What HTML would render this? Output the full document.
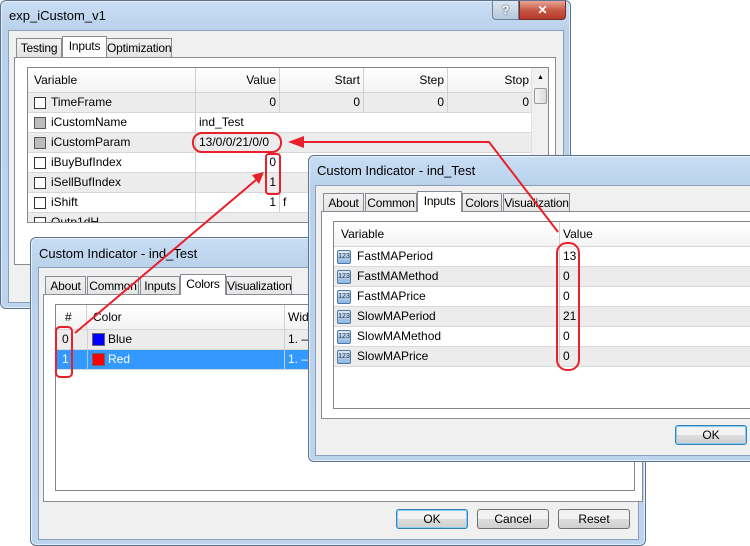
<!DOCTYPE html>
<html><head><meta charset="utf-8"><style>
*{box-sizing:border-box;margin:0;padding:0}
body{width:750px;height:546px;background:#fff;position:relative;overflow:hidden;font-family:"Liberation Sans",sans-serif;font-size:12px;color:#000}
.a{position:absolute}
.win{position:absolute;background:linear-gradient(#c9def5,#b9d1ea 30px,#bcd4ee);border:1px solid #5b738c;border-radius:6px;box-shadow:0 0 0 1px rgba(255,255,255,.6) inset}
.title{position:absolute;left:8px;top:7px;font-size:13px}
.body{position:absolute;background:#f0f0f0;border:1px solid #8aa0b8}
.tab{position:absolute;height:19px;border:1px solid #898c95;border-bottom:none;background:linear-gradient(#f2f2f2,#e3e3e3);text-align:center;line-height:18px;padding:0;white-space:nowrap;overflow:hidden;letter-spacing:-0.2px}
.tab.on{background:#fff;height:21px;z-index:2}
.grid{position:absolute;border:1px solid #828790;background:#fff;overflow:hidden}
.hd{position:absolute;top:0;height:25px;line-height:25px;background:linear-gradient(#fff,#f3f3f3);border-bottom:1px solid #d5d5d5}
.row{position:absolute;left:0;right:0;height:20px;line-height:19px;border-bottom:1px solid #d8d8d8}
.g{background:#ececec}
.c{position:absolute;top:0;height:20px;border-right:1px solid #d0d0d0;padding:0 3px}
.r{text-align:right}
.cb{position:absolute;left:6px;top:4px;width:12px;height:12px;border:1px solid #333;background:#fff}
.cb.d{background:#bcbcbc;border-color:#555}
.ic{position:absolute;left:3px;top:3px;width:14px;height:14px;background:linear-gradient(#dbeaf9,#8fb6e0);border:1px solid #4d79aa;border-radius:2px;font-size:7px;line-height:12px;text-align:center;color:#123}
.btn{position:absolute;height:20px;border:1px solid #707070;border-radius:3px;background:linear-gradient(#f2f2f2 50%,#dddddd 50%,#cfcfcf);text-align:center;line-height:18px}
.btn.def{border-color:#3c7fb1;box-shadow:0 0 0 1px #7fd0f5 inset}
</style></head><body>

<div class="win" style="left:0;top:0;width:571px;height:309px">
  <div class="title">exp_iCustom_v1</div>
  <div class="a" style="left:491px;top:0;width:27px;height:19px;border:1px solid #6d829a;border-top:none;border-radius:0 0 0 4px;background:linear-gradient(#dbe6f2,#b6c8dc);text-align:center;color:#fff;font-weight:bold;line-height:18px;text-shadow:0 0 2px #333">?</div>
  <div class="a" style="left:518px;top:0;width:47px;height:19px;border:1px solid #7a2a24;border-top:none;border-radius:0 0 4px 0;background:linear-gradient(#e8a597,#c75a45 50%,#b8382a);text-align:center;color:#fff;font-weight:bold;line-height:18px">✕</div>
  <div class="body" style="left:7px;top:29px;width:556px;height:273px"></div>
</div>
<div class="tab" style="left:16px;top:38px;width:46px">Testing</div>
<div class="tab on" style="left:62px;top:36px;width:45px">Inputs</div>
<div class="tab" style="left:106px;top:38px;width:66px">Optimization</div>
<div class="a" style="left:14px;top:57px;width:542px;height:208px;background:#fff;border:1px solid #898c95"></div>
<div class="grid" style="left:27px;top:67px;width:522px;height:156px">
  <div class="hd" style="left:0;width:504px">
    <div class="c" style="left:0;width:168px;height:25px;padding-left:6px">Variable</div>
    <div class="c r" style="left:168px;width:84px;height:25px">Value</div>
    <div class="c r" style="left:252px;width:84px;height:25px">Start</div>
    <div class="c r" style="left:336px;width:84px;height:25px">Step</div>
    <div class="c r" style="left:420px;width:84px;height:25px;border:none">Stop</div>
  </div>
  <div class="row g" style="top:25px;right:17px"><div class="cb"></div><div class="c" style="left:20px;width:148px">TimeFrame</div><div class="c r" style="left:168px;width:84px">0</div><div class="c r" style="left:252px;width:84px">0</div><div class="c r" style="left:336px;width:84px">0</div><div class="c r" style="left:420px;width:84px;border:none">0</div></div>
  <div class="row" style="top:45px;right:17px"><div class="cb d"></div><div class="c" style="left:20px;width:148px">iCustomName</div><div class="c" style="left:168px;width:336px;border:none">ind_Test</div></div>
  <div class="row g" style="top:65px;right:17px"><div class="cb d"></div><div class="c" style="left:20px;width:148px">iCustomParam</div><div class="c" style="left:168px;width:336px;border:none">13/0/0/21/0/0</div></div>
  <div class="row" style="top:85px;right:17px"><div class="cb"></div><div class="c" style="left:20px;width:148px">iBuyBufIndex</div><div class="c r" style="left:168px;width:84px">0</div></div>
  <div class="row g" style="top:105px;right:17px"><div class="cb"></div><div class="c" style="left:20px;width:148px">iSellBufIndex</div><div class="c r" style="left:168px;width:84px">1</div></div>
  <div class="row" style="top:125px;right:17px"><div class="cb"></div><div class="c" style="left:20px;width:148px">iShift</div><div class="c r" style="left:168px;width:84px">1</div><div class="c" style="left:252px;width:84px">f</div></div>
  <div class="row g" style="top:145px;right:17px"><div class="cb"></div><div class="c" style="left:20px;width:148px">Outp1dH</div></div>
  <div class="a" style="right:0;top:0;width:17px;height:156px;background:#f0f0f0;border-left:1px solid #e0e0e0"><div class="a" style="left:2px;top:20px;width:13px;height:16px;border:1px solid #999;border-radius:2px;background:linear-gradient(90deg,#f3f3f3,#dcdcdc)"></div><div class="a" style="left:5px;top:6px;font-size:7px">▲</div></div>
</div>

<div class="win" style="left:30px;top:237px;width:616px;height:309px">
  <div class="title" style="top:8px">Custom Indicator - ind_Test</div>
  <div class="body" style="left:7px;top:29px;width:601px;height:273px"></div>
</div>
<div class="tab" style="left:45px;top:276px;width:41px">About</div>
<div class="tab" style="left:87px;top:276px;width:52px">Common</div>
<div class="tab" style="left:140px;top:276px;width:40px">Inputs</div>
<div class="tab on" style="left:180px;top:274px;width:46px">Colors</div>
<div class="tab" style="left:226px;top:276px;width:66px">Visualization</div>
<div class="a" style="left:43px;top:294px;width:600px;height:208px;background:#fff;border:1px solid #898c95"></div>
<div class="grid" style="left:55px;top:304px;width:580px;height:187px">
  <div class="hd" style="left:0;width:580px">
    <div class="c" style="left:0;width:31px;height:25px;padding-left:9px">#</div>
    <div class="c" style="left:31px;width:198px;height:25px;padding-left:6px">Color</div>
    <div class="c" style="left:229px;width:100px;height:25px">Width</div>
  </div>
  <div class="row g" style="top:25px"><div class="c" style="left:0;width:31px;padding-left:6px;border:none">0</div><div class="c" style="left:31px;width:198px;border-left:1px solid #d0d0d0"><span class="a" style="left:4px;top:3px;width:13px;height:13px;background:#0000ff;border:1px solid #666"></span><span style="padding-left:17px">Blue</span></div><div class="c" style="left:229px;width:100px">1. —</div></div>
  <div class="row" style="top:45px;background:#3399ff;color:#fff"><div class="c" style="left:0;width:31px;padding-left:6px;border:none">1</div><div class="c" style="left:31px;width:198px;border-left:1px solid #9cc"><span class="a" style="left:4px;top:3px;width:13px;height:13px;background:#ff0000;border:1px solid #666"></span><span style="padding-left:17px">Red</span></div><div class="c" style="left:229px;width:100px">1. —</div></div>
</div>
<div class="btn def" style="left:396px;top:509px;width:72px">OK</div>
<div class="btn" style="left:477px;top:509px;width:72px">Cancel</div>
<div class="btn" style="left:558px;top:509px;width:72px">Reset</div>

<div class="win" style="left:308px;top:155px;width:460px;height:307px">
  <div class="title" style="top:7px">Custom Indicator - ind_Test</div>
  <div class="body" style="left:6px;top:29px;width:450px;height:271px"></div>
</div>
<div class="tab" style="left:323px;top:193px;width:41px">About</div>
<div class="tab" style="left:365px;top:193px;width:52px">Common</div>
<div class="tab on" style="left:417px;top:191px;width:45px">Inputs</div>
<div class="tab" style="left:462px;top:193px;width:40px">Colors</div>
<div class="tab" style="left:503px;top:193px;width:67px">Visualization</div>
<div class="a" style="left:321px;top:211px;width:440px;height:208px;background:#fff;border:1px solid #898c95"></div>
<div class="grid" style="left:333px;top:221px;width:430px;height:188px">
  <div class="hd" style="left:0;width:430px">
    <div class="c" style="left:0;width:226px;height:25px;padding-left:7px">Variable</div>
    <div class="c" style="left:226px;width:200px;height:25px;border:none">Value</div>
  </div>
  <div class="row" style="top:25px"><div class="ic">123</div><div class="c" style="left:20px;width:206px">FastMAPeriod</div><div class="c" style="left:226px;width:200px;border:none">13</div></div>
  <div class="row g" style="top:45px"><div class="ic">123</div><div class="c" style="left:20px;width:206px">FastMAMethod</div><div class="c" style="left:226px;width:200px;border:none">0</div></div>
  <div class="row" style="top:65px"><div class="ic">123</div><div class="c" style="left:20px;width:206px">FastMAPrice</div><div class="c" style="left:226px;width:200px;border:none">0</div></div>
  <div class="row g" style="top:85px"><div class="ic">123</div><div class="c" style="left:20px;width:206px">SlowMAPeriod</div><div class="c" style="left:226px;width:200px;border:none">21</div></div>
  <div class="row" style="top:105px"><div class="ic">123</div><div class="c" style="left:20px;width:206px">SlowMAMethod</div><div class="c" style="left:226px;width:200px;border:none">0</div></div>
  <div class="row g" style="top:125px"><div class="ic">123</div><div class="c" style="left:20px;width:206px">SlowMAPrice</div><div class="c" style="left:226px;width:200px;border:none">0</div></div>
</div>
<div class="btn def" style="left:675px;top:425px;width:72px">OK</div>

<svg class="a" style="left:0;top:0" width="750" height="546" viewBox="0 0 750 546">
  <g fill="none" stroke="#e8202a" stroke-width="2">
    <rect x="193" y="133" width="88" height="19" rx="9"/>
    <rect x="266" y="154" width="14" height="40" rx="3"/>
    <rect x="56" y="327" width="16" height="50" rx="4"/>
    <rect x="557" y="243" width="22" height="127" rx="10"/>
    <polyline points="558,232 489,142 300,142"/>
    <line x1="75" y1="333" x2="256" y2="180"/>
  </g>
  <polygon points="288,142 304,136 304,148" fill="#e8202a"/>
  <polygon points="264,172 252,175 259,184" fill="#e8202a"/>
</svg>
</body></html>
